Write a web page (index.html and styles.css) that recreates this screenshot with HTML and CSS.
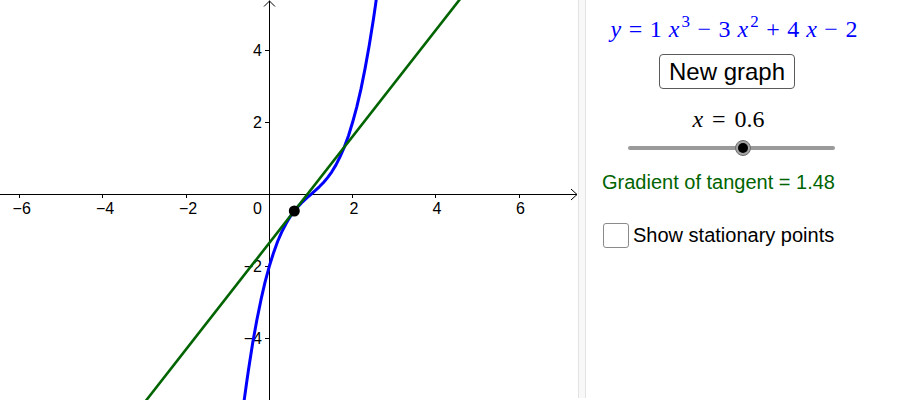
FILE: index.html
```html
<!DOCTYPE html>
<html>
<head>
<meta charset="utf-8">
<link rel="stylesheet" href="styles.css">
</head>
<body>
<div class="app">
  <svg class="graph" width="578" height="400" viewBox="0 0 578 400">
    <g class="axes">
      <line x1="0" y1="194.5" x2="577" y2="194.5"/>
      <polyline points="571,189 577,194.5 571,200" fill="none"/>
      <line x1="269.5" y1="0.5" x2="269.5" y2="400"/>
      <polyline points="264,6.5 269.5,1 275,6.5" fill="none"/>
      <line x1="19.5" y1="194.5" x2="19.5" y2="198"/>
      <line x1="102.5" y1="194.5" x2="102.5" y2="198"/>
      <line x1="186.5" y1="194.5" x2="186.5" y2="198"/>
      <line x1="352.5" y1="194.5" x2="352.5" y2="198"/>
      <line x1="435.5" y1="194.5" x2="435.5" y2="198"/>
      <line x1="519.5" y1="194.5" x2="519.5" y2="198"/>
      <line x1="265" y1="50.5" x2="269.5" y2="50.5"/>
      <line x1="265" y1="122.5" x2="269.5" y2="122.5"/>
      <line x1="265" y1="266.5" x2="269.5" y2="266.5"/>
      <line x1="265" y1="338.5" x2="269.5" y2="338.5"/>
    </g>
    <g class="labels">
      <text x="21.7" y="213.5" text-anchor="middle">−6</text>
      <text x="105" y="213.5" text-anchor="middle">−4</text>
      <text x="188" y="213.5" text-anchor="middle">−2</text>
      <text x="257.5" y="213.5" text-anchor="middle">0</text>
      <text x="354" y="213.5" text-anchor="middle">2</text>
      <text x="437" y="213.5" text-anchor="middle">4</text>
      <text x="520.5" y="213.5" text-anchor="middle">6</text>
      <text x="262" y="56" text-anchor="end">4</text>
      <text x="262" y="128" text-anchor="end">2</text>
      <text x="262" y="272" text-anchor="end">−2</text>
      <text x="262" y="344" text-anchor="end">−4</text>
    </g>
    <polyline class="curve" points="242.2,415.4 244.3,399.4 246.4,384.2 248.5,369.8 252.6,343.5 256.8,320.2 261.0,299.7 265.1,281.8 269.3,266.3 273.5,252.9 277.6,241.5 281.8,231.9 286.0,223.7 290.1,216.8 294.3,211.0 298.5,206.1 302.6,201.8 306.8,197.9 311.0,194.3 315.1,190.7 319.3,186.8 323.5,182.5 327.6,177.6 331.8,171.8 336.0,164.9 340.1,156.7 344.3,147.1 348.5,135.7 352.6,122.3 356.8,106.8 361.0,88.9 365.1,68.4 369.3,45.1 373.5,18.8 375.6,4.4 377.6,-10.8 379.7,-26.8"/>
    <line class="tangent" x1="144.9" y1="402" x2="460.9" y2="-2"/>
    <circle class="pt" cx="294.3" cy="211" r="5.5"/>
  </svg>
  <div class="divider"></div>
  <div class="panel">
    <div class="eq"><i>y</i><span class="rel">=</span>1<i class="v">x</i><sup>3</sup><span class="bin">−</span>3<i class="v">x</i><sup>2</sup><span class="bin">+</span>4<i class="v">x</i><span class="bin">−</span>2</div>
    <div class="row btnrow"><button class="btn">New graph</button></div>
    <div class="xval"><i>x</i><span class="rel">=</span>0.6</div>
    <div class="row sliderrow"><div class="slider"><div class="track"></div><div class="knob"><div class="dot"></div></div></div></div>
    <div class="gradient">Gradient of tangent = 1.48</div>
    <div class="check"><span class="box"></span><span class="checklabel">Show stationary points</span></div>
  </div>
</div>
</body>
</html>
```
FILE: styles.css
```css
html, body {
  margin: 0;
  padding: 0;
  background: #ffffff;
}
body {
  width: 900px;
  height: 400px;
  overflow: hidden;
}
.app {
  display: flex;
  width: 900px;
  height: 400px;
}
.graph {
  flex: 0 0 578px;
  display: block;
  overflow: hidden;
}
.axes line, .axes polyline {
  stroke: #000;
  stroke-width: 1;
}
.labels text {
  font-family: "Liberation Sans", Arial, sans-serif;
  font-size: 16px;
  fill: #000;
}
.curve {
  fill: none;
  stroke: #0000ff;
  stroke-width: 3;
  stroke-linejoin: round;
}
.tangent {
  stroke: #006400;
  stroke-width: 2.6;
}
.pt {
  fill: #000;
}
.divider {
  flex: 0 0 8px;
  box-sizing: border-box;
  height: 398px;
  background: #f8f8f8;
  border-left: 1px solid #e2e2e2;
  border-right: 1px solid #e2e2e2;
}
.panel {
  flex: 1 1 auto;
  display: flex;
  flex-direction: column;
}
.row {
  width: 290px;
  display: flex;
  justify-content: center;
  align-items: center;
}
.eq {
  width: 296px;
  margin-top: 15px;
  height: 28px;
  line-height: 28px;
  text-align: center;
  font-family: "Liberation Serif", "Times New Roman", serif;
  font-size: 24px;
  color: #0000ff;
  white-space: nowrap;
}
.eq i, .xval i {
  font-style: italic;
}
.eq .v {
  margin-left: 7px;
}
.eq sup {
  font-size: 17px;
  line-height: 0;
  vertical-align: 10px;
  margin-left: 2px;
}
.eq .rel {
  margin: 0 7.5px;
}
.eq .bin {
  margin: 0 7.5px;
}
.btnrow {
  margin-top: 11px;
}
.btn {
  box-sizing: border-box;
  height: 35px;
  width: 136px;
  margin-right: 8px;
  padding: 0;
  background: #ffffff;
  border: 1px solid #5a5a5a;
  border-radius: 4px;
  font-family: "Liberation Sans", Arial, sans-serif;
  font-size: 24px;
  line-height: 33px;
  color: #000;
}
.xval {
  width: 285px;
  margin-top: 16px;
  height: 28px;
  line-height: 28px;
  text-align: center;
  font-family: "Liberation Serif", "Times New Roman", serif;
  font-size: 24px;
  color: #000;
  white-space: nowrap;
}
.xval .rel {
  margin: 0 9px;
}
.sliderrow {
  margin-top: 6px;
  height: 17px;
}
.slider {
  position: relative;
  width: 207px;
  height: 17px;
}
.track {
  position: absolute;
  left: 0;
  right: 0;
  top: 6.5px;
  height: 4px;
  border-radius: 2px;
  background: #9a9a9a;
}
.knob {
  position: absolute;
  left: 107px;
  top: 0.5px;
  width: 16px;
  height: 16px;
  box-sizing: border-box;
  border-radius: 50%;
  background: #a4a4a4;
  border: 1px solid #6e6e6e;
  display: flex;
  align-items: center;
  justify-content: center;
}
.dot {
  width: 10px;
  height: 10px;
  border-radius: 50%;
  background: #000;
}
.gradient {
  margin-top: 14px;
  margin-left: 16px;
  height: 24px;
  line-height: 24px;
  font-family: "Liberation Sans", Arial, sans-serif;
  font-size: 20px;
  color: #006400;
  white-space: nowrap;
}
.check {
  margin-top: 29px;
  margin-left: 17px;
  height: 25px;
  display: flex;
  align-items: center;
}
.box {
  box-sizing: border-box;
  width: 26px;
  height: 25px;
  border: 1px solid #8a8a8a;
  border-radius: 3px;
  background: #fff;
}
.checklabel {
  margin-left: 4px;
  line-height: 25px;
  font-family: "Liberation Sans", Arial, sans-serif;
  font-size: 20px;
  color: #000;
  white-space: nowrap;
}
```
